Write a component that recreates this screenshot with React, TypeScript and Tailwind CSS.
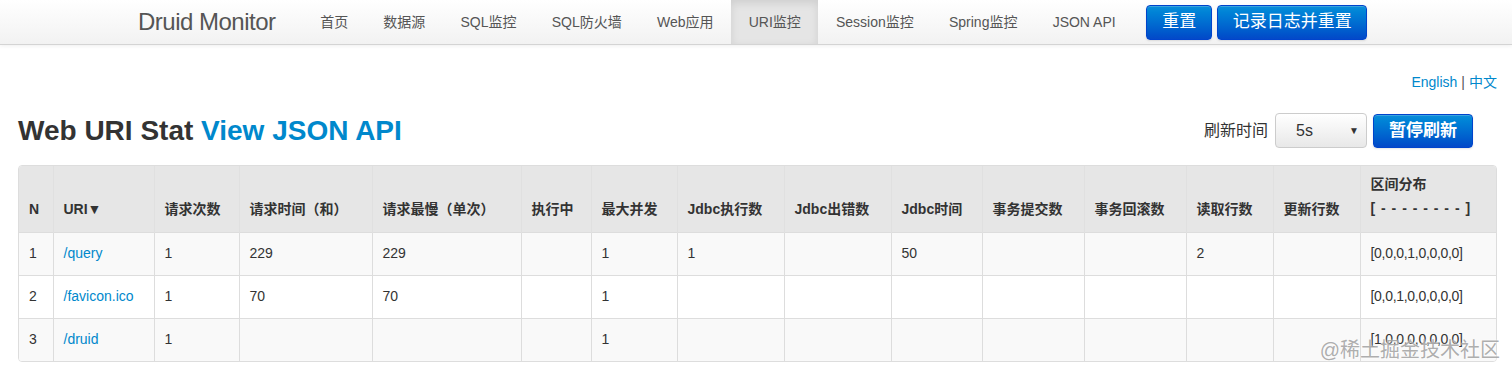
const navItems = ["首页", "数据源", "SQL监控", "SQL防火墙", "Web应用", "URI监控", "Session监控", "Spring监控", "JSON API"];

// column widths measured off the screenshot
const cols = [34, 101, 85, 133, 149, 70, 86, 107, 107, 91, 102, 102, 87, 87, 138];

const headers = ["N", "URI▼", "请求次数", "请求时间（和）", "请求最慢（单次）", "执行中", "最大并发", "Jdbc执行数", "Jdbc出错数", "Jdbc时间", "事务提交数", "事务回滚数", "读取行数", "更新行数"];

const rows = [
  { n: 1, uri: "/query", cells: ["1", "229", "229", "", "1", "1", "", "50", "", "", "2", ""], hist: "[0,0,0,1,0,0,0,0]" },
  { n: 2, uri: "/favicon.ico", cells: ["1", "70", "70", "", "1", "", "", "", "", "", "", ""], hist: "[0,0,1,0,0,0,0,0]" },
  { n: 3, uri: "/druid", cells: ["1", "", "", "", "1", "", "", "", "", "", "", ""], hist: "[1,0,0,0,0,0,0,0]" },
];

const font = "font-['Liberation_Sans','Noto_Sans_CJK_SC',sans-serif]";

function BlueButton({ children, className = "" }: { children: React.ReactNode; className?: string }) {
  return (
    <button
      className={`flex items-center justify-center rounded-[4px] border border-[#0044cc] bg-gradient-to-b from-[#0a8fd9] to-[#0448c8] text-white shadow-[inset_0_1px_0_rgba(255,255,255,0.2),0_1px_2px_rgba(0,0,0,0.1)] ${className}`}
    >
      {children}
    </button>
  );
}

export default function App() {
  return (
    <div className={`relative min-h-[375px] bg-white text-[#333] ${font}`}>
      {/* navbar */}
      <div className="flex h-[45px] items-center border-b border-[#d4d4d4] bg-gradient-to-b from-white to-[#f2f2f2] pl-[138px] shadow-[0_1px_4px_rgba(0,0,0,0.065)]">
        <span className="mr-[27px] text-[24px] leading-none text-[#555] tracking-[-0.5px]">Druid Monitor</span>
        <div className="flex h-full">
          {navItems.map((item) => (
            <div
              key={item}
              className={`flex h-full items-center px-[17.6px] text-[14px] text-[#555] ${
                item === "URI监控" ? "bg-[#e5e5e5] shadow-[inset_0_3px_8px_rgba(0,0,0,0.1)]" : ""
              }`}
            >
              {item}
            </div>
          ))}
        </div>
        <div className="ml-[13px] flex gap-[5px]">
          <BlueButton className="h-[35px] w-[66px] text-[17px]">重置</BlueButton>
          <BlueButton className="h-[35px] w-[150px] text-[17px]">记录日志并重置</BlueButton>
        </div>
      </div>

      <div className="px-[18px] pr-[15px]">
        <div className="flex justify-end pt-[27px] text-[14px] leading-[20px]">
          <span className="text-[#0088cc]">English</span>
          <span className="mx-[4px] text-[#555]">|</span>
          <span className="text-[#0088cc]">中文</span>
        </div>

        {/* title row */}
        <div className="mt-[21px] flex h-[35px] items-center justify-between">
          <h1 className="text-[28px] font-bold leading-none">
            Web URI Stat <span className="text-[#0088cc]">View JSON API</span>
          </h1>
          <div className="mr-[24px] flex items-center">
            <span className="mr-[7px] text-[16px] text-[#333]">刷新时间</span>
            <div className="flex h-[35px] w-[92px] items-center justify-between rounded-[4px] border border-[#ccc] bg-gradient-to-b from-white to-[#e8e8e8] pl-[20px] pr-[7px] text-[16px]">
              <span>5s</span>
              <span className="text-[10px] text-[#333]">▼</span>
            </div>
            <BlueButton className="ml-[6px] h-[34px] w-[100px] text-[17px] font-bold">暂停刷新</BlueButton>
          </div>
        </div>

        {/* table */}
        <div className="mt-[17px] overflow-hidden rounded-[4px] border border-[#ddd]">
          <table className="w-[1479px] table-fixed border-collapse text-[14px]">
            <colgroup>
              {cols.map((w, i) => (
                <col key={i} style={{ width: w }} />
              ))}
            </colgroup>
            <thead>
              <tr className="h-[66px] bg-[#e6e6e6]">
                {headers.map((h, i) => (
                  <th
                    key={h}
                    className={`whitespace-nowrap border-l border-[#e0e0e0] pb-[12px] pl-[10px] text-left align-bottom font-bold text-[#333] ${i === 0 ? "border-l-0" : ""}`}
                  >
                    {h}
                  </th>
                ))}
                <th className="border-l border-[#e0e0e0] pb-[12px] pl-[10px] text-left align-bottom font-bold text-[#333]">
                  <div className="leading-[24px]">区间分布</div>
                  <div className="leading-[24px] tracking-[1px]">[ - - - - - - - - ]</div>
                </th>
              </tr>
            </thead>
            <tbody>
              {rows.map((r) => (
                <tr key={r.n} className={`h-[43px] ${r.n === 2 ? "bg-white" : "bg-[#f9f9f9]"}`}>
                  <td className="border-t border-[#ddd] pl-[10px]">{r.n}</td>
                  <td className="border-l border-t border-[#ddd] pl-[10px] text-[#0088cc]">{r.uri}</td>
                  {r.cells.map((c, i) => (
                    <td key={i} className="border-l border-t border-[#ddd] pl-[10px]">
                      {c}
                    </td>
                  ))}
                  <td className="border-l border-t border-[#ddd] pl-[10px] tracking-[-0.3px]">{r.hist}</td>
                </tr>
              ))}
            </tbody>
          </table>
        </div>
      </div>

      {/* watermark */}
      <div className="pointer-events-none absolute right-[12px] top-[338px] text-right">
        <div className="text-[20px] leading-[24px] text-[#999]/80 [text-shadow:0_0_2px_#fff]">@稀土掘金技术社区</div>
      </div>
    </div>
  );
}
